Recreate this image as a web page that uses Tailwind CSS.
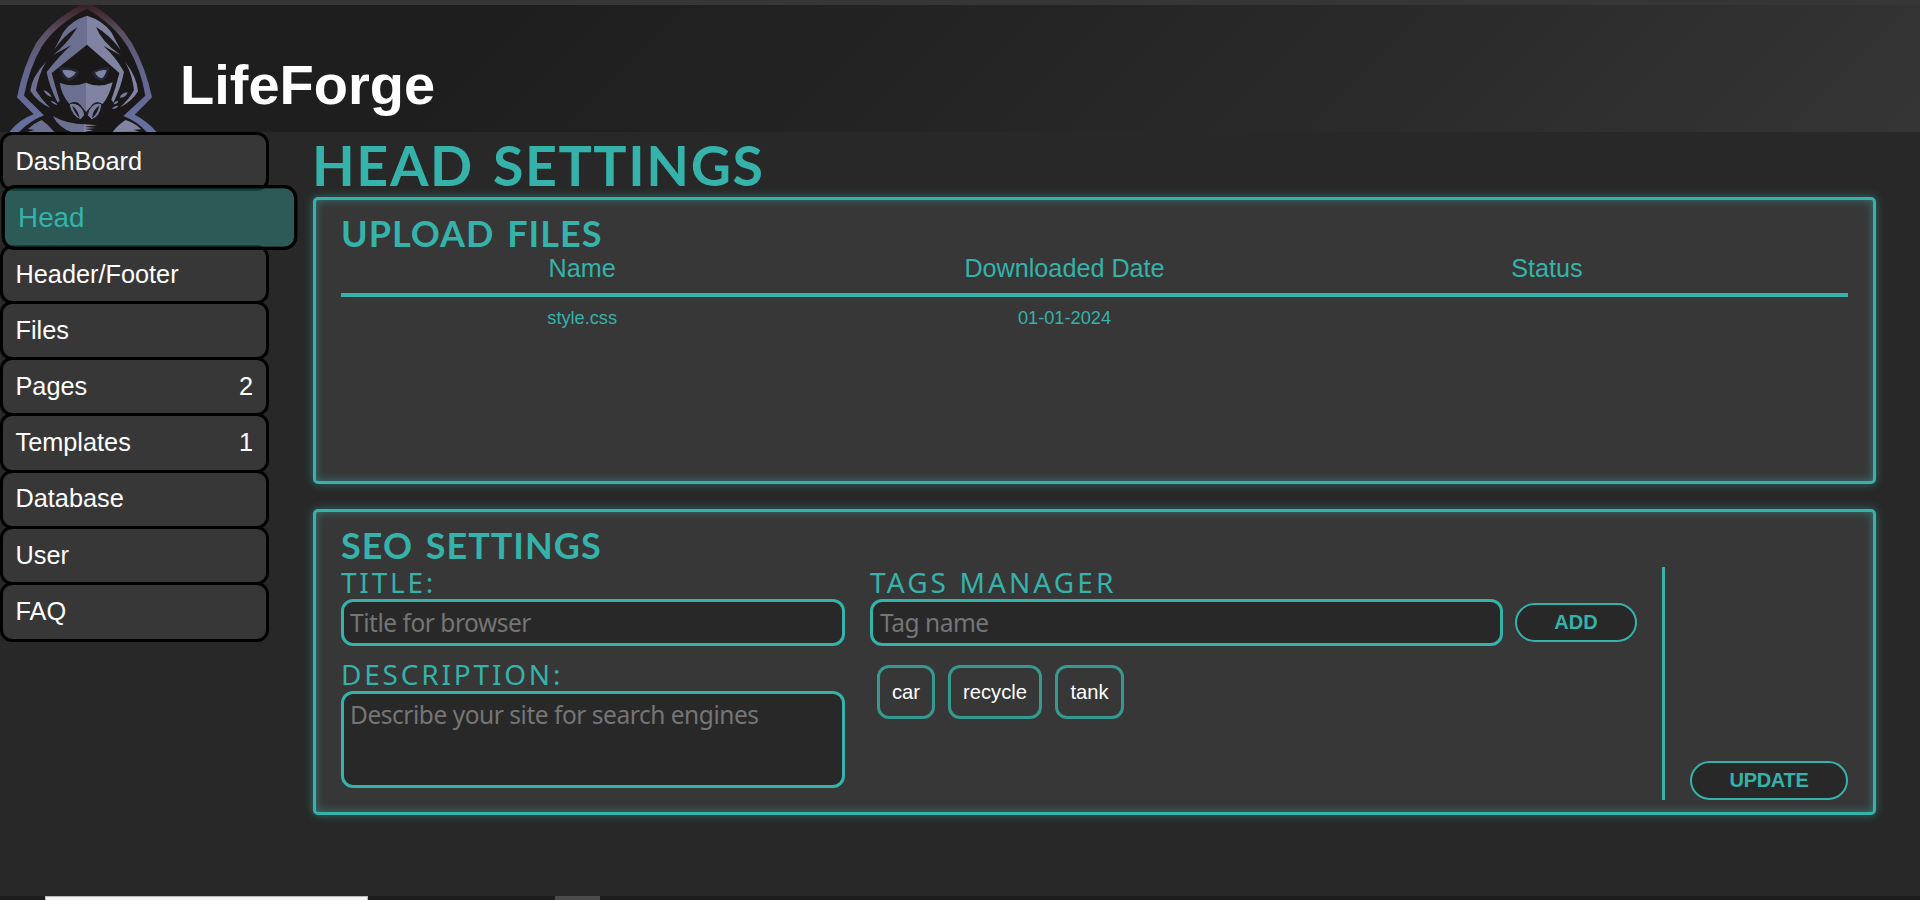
<!DOCTYPE html>
<html lang="en">
<head>
<meta charset="utf-8">
<title>LifeForge</title>
<script src="https://cdn.jsdelivr.net/npm/@tailwindcss/browser@4"></script>
</head>
<body class="h-[900px] overflow-hidden bg-[#282828] font-['Liberation_Sans',Arial,sans-serif] text-white flex flex-col">
<div class="h-[5px] shrink-0 bg-[#363636]"></div>
<header class="h-[127px] shrink-0 flex bg-[linear-gradient(135deg,#1e1e1e_0%,#1e1e1e_25%,#282828_65%,#353535_100%)]">
  <svg class="w-[160px] h-[127px] shrink-0" viewBox="0 15 480 381">
    <defs>
      <linearGradient id="rim" x1="0" y1="0" x2="0" y2="1"><stop offset="0" stop-color="#3a2024"/><stop offset=".22" stop-color="#5c5064"/><stop offset=".5" stop-color="#62658c"/><stop offset="1" stop-color="#6670a0"/></linearGradient>
    </defs>
    <path fill="url(#rim)" d="M243 15H280Q355 62 396 130Q438 205 456 292L404 344Q440 362 470 396H28Q58 358 101 343L51 292Q70 198 108 130Q155 60 243 15Z"/>
    <path fill="#1a1819" d="M261 26Q345 76 384 142Q424 212 436 287L370 348Q412 364 440 396H57Q88 364 132 346L72 287Q88 205 124 142Q168 72 261 26Z"/>
    <path fill="#6b7090" d="M261 47Q212 62 190 97L162 150Q192 106 232 82Q205 128 160 165L213 136Q178 168 140 216Q148 260 173 308L179 302Q166 262 155 219L261 134Z"/>
    <path fill="#8083a2" d="M261 47Q310 62 334 97L362 150Q328 104 288 81Q304 124 362 166L310 137Q345 168 372 215Q363 262 340 308L334 299Q348 262 358 219L261 134Z"/>
    <path fill="#6b7090" d="M138 185Q94 232 91 273Q113 307 151 324Q122 296 108 271Q114 228 138 185Z"/>
    <path fill="#8083a2" d="M376 186Q411 232 414 274Q397 304 360 322Q391 294 402 270Q397 226 376 186Z"/>
    <path fill="#232838" d="M177 202Q210 202 238 214Q228 242 205 243Q185 235 177 202ZM329 202Q300 202 275 216Q286 242 307 243Q323 235 329 202Z"/>
    <path fill="#8083a2" d="M187 211Q208 207 228 217Q218 233 205 234Q193 228 187 211ZM320 211Q302 207 285 218Q293 232 306 235Q315 228 320 211Z"/>
    <path fill="#6b7090" d="M179 248Q218 263 258 248V336L246 321Q230 297 208 312Q185 285 179 248Z"/>
    <path fill="#8083a2" d="M258 248Q298 266 338 247Q328 288 308 312Q286 298 272 320L258 336Z"/>
    <path fill="#777b9b" stroke="#1a1819" stroke-width="3" d="M207 314Q216 305 234 314Q252 326 254 345L242 359Q217 351 207 314ZM306 314Q296 304 279 315Q262 329 262 346L275 359Q300 352 306 314Z"/>
    <path fill="#1a1819" d="M216 317Q233 328 239 354Q225 341 216 317ZM298 317Q279 328 276 354Q292 342 298 317Z"/>
    <path fill="#777b9b" d="M130 270Q140 288 155 291Q147 275 130 270ZM152 303Q160 314 172 315Q165 304 152 303ZM383 277Q365 278 359 293Q378 294 383 277ZM355 302Q342 304 341 313Q354 312 355 302ZM355 317Q344 316 335 326Q350 328 355 317Z"/>
    <path fill="#6b7090" d="M158 348Q205 374 258 373V396H214Q178 384 158 348ZM125 360Q146 374 163 396H82L104 390L84 387Q101 370 125 360Z"/>
    <path fill="#8083a2" d="M252 373L292 376L250 380L286 384L252 387L280 391L252 396ZM377 360Q406 370 424 388L400 389L419 395L338 396Q354 374 377 360Z"/>
  </svg>
  <h1 class="ml-[20px] mt-[48px] text-[56px] leading-[64px] font-bold">LifeForge</h1>
</header>
<div class="flex flex-1 min-h-0">
  <nav class="w-[269px] shrink-0 flex flex-col text-[25.3px]">
    <a class="h-[59.3px] shrink-0 border-[3px] border-black rounded-[12px] bg-[#373737] pl-[12.5px] pr-[13px] flex items-center justify-between">DashBoard</a>
    <a class="h-[59.3px] shrink-0 -mt-[3px] scale-110 origin-center translate-x-[15px] relative z-10 border-[3px] border-black rounded-[12px] bg-[#33c2b8]/33 bg-clip-padding text-[#35b2aa] pl-[12px] pr-[13px] flex items-center justify-between">Head</a>
    <a class="h-[59.3px] shrink-0 -mt-[3px] border-[3px] border-black rounded-[12px] bg-[#373737] pl-[12.5px] pr-[13px] pt-px flex items-center justify-between">Header/Footer</a>
    <a class="h-[59.3px] shrink-0 -mt-[3px] border-[3px] border-black rounded-[12px] bg-[#373737] pl-[12.5px] pr-[13px] flex items-center justify-between">Files</a>
    <a class="h-[59.3px] shrink-0 -mt-[3px] border-[3px] border-black rounded-[12px] bg-[#373737] pl-[12.5px] pr-[13px] flex items-center justify-between">Pages<span>2</span></a>
    <a class="h-[59.3px] shrink-0 -mt-[3px] border-[3px] border-black rounded-[12px] bg-[#373737] pl-[12.5px] pr-[13px] flex items-center justify-between">Templates<span>1</span></a>
    <a class="h-[59.3px] shrink-0 -mt-[3px] border-[3px] border-black rounded-[12px] bg-[#373737] pl-[12.5px] pr-[13px] flex items-center justify-between">Database</a>
    <a class="h-[59.3px] shrink-0 -mt-[3px] border-[3px] border-black rounded-[12px] bg-[#373737] pl-[12.5px] pr-[13px] flex items-center justify-between">User</a>
    <a class="h-[59.3px] shrink-0 -mt-[3px] border-[3px] border-black rounded-[12px] bg-[#373737] pl-[12.5px] pr-[13px] pb-px flex items-center justify-between">FAQ</a>
  </nav>
  <main class="ml-[44px] w-[1563px] shrink-0 flex flex-col text-[#35b2aa]">
    <h1 class="h-[65px] -ml-px font-['Lato',sans-serif] font-bold text-[55.5px] leading-[66px] tracking-[1.6px] [word-spacing:4px] whitespace-nowrap">HEAD SETTINGS</h1>
    <section class="h-[287px] border-[3px] border-[#35b2aa] rounded-[5px] bg-[#373737] shadow-[0_0_10px_#35b2aa80,inset_0_0_10px_#35b2aa80] px-[25px] pt-[12px]">
      <h2 class="font-['Lato',sans-serif] font-bold text-[36px] leading-[42px] tracking-[1px] [word-spacing:3px]">UPLOAD FILES</h2>
      <div class="grid grid-cols-3 pr-[60px] text-center text-[25.2px] leading-[28px]"><span>Name</span><span>Downloaded Date</span><span>Status</span></div>
      <div class="h-[4px] mt-[11px] bg-[#35b2aa]"></div>
      <div class="grid grid-cols-3 pr-[60px] mt-[11px] text-center text-[18.2px] leading-[20px]"><span>style.css</span><span>01-01-2024</span><span></span></div>
    </section>
    <section class="mt-[25px] h-[306px] border-[3px] border-[#35b2aa] rounded-[5px] bg-[#373737] shadow-[0_0_10px_#35b2aa80,inset_0_0_10px_#35b2aa80] px-[25px] pt-[12px]">
      <h2 class="h-[43px] font-['Lato',sans-serif] font-bold text-[36px] leading-[42px] tracking-[1px] [word-spacing:3px]">SEO SETTINGS</h2>
      <div class="flex h-[233px]">
        <div class="w-[504px] flex flex-col font-['Noto_Sans',sans-serif]">
          <label class="h-[32px] text-[28px] leading-[31px] tracking-[2.8px]">TITLE:</label>
          <div class="h-[47px] border-[3px] border-[#35b2aa] rounded-[12px] bg-[#282828] px-[6px] text-[24.5px] leading-[41px] tracking-[-0.47px] text-[#757575]">Title for browser</div>
          <label class="mt-[13px] h-[32px] text-[28px] leading-[31px] tracking-[2.8px]">DESCRIPTION:</label>
          <div class="h-[97px] border-[3px] border-[#35b2aa] rounded-[12px] bg-[#282828] px-[6px] text-[24.5px] leading-[41px] tracking-[-0.47px] text-[#757575]">Describe your site for search engines</div>
        </div>
        <div class="ml-[25px] w-[767px] flex flex-col">
          <label class="h-[32px] font-['Noto_Sans',sans-serif] text-[28px] leading-[31px] tracking-[3.1px]">TAGS MANAGER</label>
          <div class="flex items-center gap-[12px]">
            <div class="w-[633px] h-[47px] border-[3px] border-[#35b2aa] rounded-[12px] bg-[#282828] px-[7px] font-['Noto_Sans',sans-serif] text-[24.5px] leading-[41px] tracking-[-0.47px] text-[#757575]">Tag name</div>
            <button class="w-[122px] h-[39px] border-2 border-[#35b2aa] rounded-[20px] bg-[#282828] text-[20px] font-bold leading-[33px] pb-px">ADD</button>
          </div>
          <div class="mt-[19px] ml-[7px] flex gap-[13px] text-white text-[20.2px] leading-[48px]">
            <span class="h-[54px] border-[3px] border-[#359990] rounded-[12px] px-[12px]">car</span>
            <span class="h-[54px] border-[3px] border-[#359990] rounded-[12px] px-[12px]">recycle</span>
            <span class="h-[54px] border-[3px] border-[#359990] rounded-[12px] px-[12.5px]">tank</span>
          </div>
        </div>
        <div class="ml-[25px] w-[3px] bg-[#35b2aa]"></div>
        <button class="ml-[25px] self-end w-[158px] h-[39px] border-2 border-[#35b2aa] rounded-[20px] bg-[#282828] text-[20px] tracking-[-0.3px] font-bold leading-[33px] pb-px">UPDATE</button>
      </div>
    </section>
  </main>
</div>
<div class="h-[4px] shrink-0 bg-[#1f1c20] flex pl-[45px]">
  <div class="w-[323px] bg-[#f5f3f5] border border-b-0 border-[#bcbabc]"></div>
  <div class="ml-[187px] w-[45px] bg-[#4c4b4c]"></div>
</div>
</body>
</html>
